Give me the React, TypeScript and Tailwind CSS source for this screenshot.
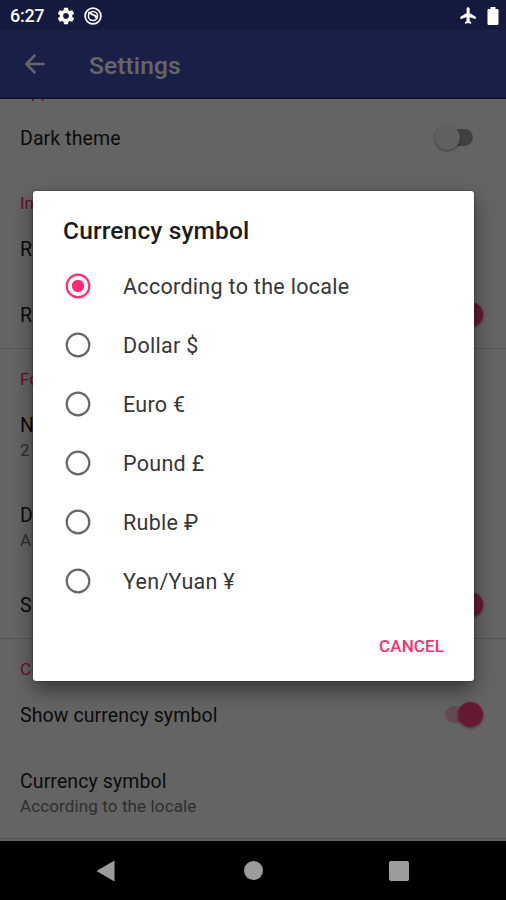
import { ReactNode, useState } from "react";

const currencies = [
  "According to the locale",
  "Dollar $",
  "Euro €",
  "Pound £",
  "Ruble ₽",
  "Yen/Yuan ¥",
];

function Switch({ on = false }: { on?: boolean }) {
  return (
    <span className={`flex h-6 w-[38px] items-center ${on ? "" : "mr-[10px]"}`}>
      <span className={`flex h-[17px] w-full items-center rounded-full ${on ? "justify-end bg-[#ff4081]/35" : "bg-[#a0a0a0]"}`}>
        <span
          className={`h-[25px] w-[25px] shrink-0 rounded-full shadow-[0_1px_3px_rgba(0,0,0,0.45)] ${
            on ? "bg-[#ff4081]" : "bg-[#f1f1f1]"
          }`}
        />
      </span>
    </span>
  );
}

function Section({ title, children }: { title: string; children: ReactNode }) {
  return (
    <section className="border-b border-[#d2d2d2]">
      <h2 className="flex h-[43px] items-end px-5 pb-[2px] text-[17px] leading-[21px] text-[#ff1f68]">{title}</h2>
      {children}
    </section>
  );
}

function Row({ title, summary, toggle }: { title: string; summary?: string; toggle?: boolean }) {
  return (
    <div className={`flex items-start justify-between pl-5 pr-[23px] ${summary ? "h-[90px]" : "h-[66px]"}`}>
      <div className="pt-[22px]">
        <p className="text-[19.5px] leading-6 tracking-[0.1px] text-[#202020]">{title}</p>
        {summary && <p className="text-[17px] leading-6 tracking-[0.12px] text-[#757575]">{summary}</p>}
      </div>
      {toggle !== undefined && (
        <div className="pt-[20px]">
          <Switch on={toggle} />
        </div>
      )}
    </div>
  );
}

export default function App() {
  const [selected, setSelected] = useState(0);

  return (
    <div className="relative flex h-[900px] w-[506px] flex-col overflow-hidden bg-[#fafafa] font-['Roboto',sans-serif]">
      {/* Status bar background, its icons sit above the scrim */}
      <div className="h-[30px] shrink-0 bg-[#303f9f]" />

      {/* App bar */}
      <header className="flex h-[69px] shrink-0 items-center border-b-2 border-[#26327d] bg-[#3f51b5] pl-[23px] text-white">
        <svg className="mt-px" width="24" height="24" viewBox="0 0 24 24" fill="none" stroke="currentColor" strokeWidth="2.5">
          <path d="M21.5 12H3.500M12.200 3L3.300 12l8.900 9" />
        </svg>
        <h1 className="ml-[42px] mt-1 text-[24.5px] font-medium leading-8 tracking-[0.15px]">Settings</h1>
      </header>

      {/* Preferences */}
      <main className="flex min-h-0 flex-1 flex-col overflow-hidden">
        <div className="flex h-[6px] shrink-0 items-end overflow-hidden px-5 pb-[2px] text-[17px] leading-[21px] text-[#ff1f68]">
          App
        </div>
        <div className="mb-px shrink-0 border-b border-[#efefef]">
          <Row title="Dark theme" toggle={false} />
        </div>
        <Section title="In">
          <Row title="R" />
          <Row title="R" toggle={true} />
        </Section>
        <Section title="Fo">
          <Row title="N" summary="2" />
          <Row title="D" summary="A" />
          <Row title="S" toggle={true} />
        </Section>
        <Section title="C">
          <Row title="Show currency symbol" toggle={true} />
          <Row title="Currency symbol" summary="According to the locale" />
        </Section>
      </main>

      {/* Navigation bar */}
      <nav className="h-[59px] shrink-0 bg-black" />

      {/* Scrim with dialog */}
      <div className="absolute inset-0 flex flex-col bg-black/60">
        <div className="flex h-[30px] items-center justify-between pl-[10px] pr-[7px] pt-px text-white">
          <div className="flex items-center">
            <span className="text-[18px] font-medium leading-5 tracking-[-0.3px]">6:27</span>
            <svg className="ml-[12px]" width="20" height="20" viewBox="0 0 24 24" fill="currentColor">
              <path d="M19.43 12.98c.04-.32.07-.64.07-.98s-.03-.66-.07-.98l2.11-1.65c.19-.15.24-.42.12-.64l-2-3.46c-.12-.22-.39-.3-.61-.22l-2.49 1c-.52-.4-1.08-.73-1.69-.98l-.38-2.65C14.46 2.18 14.25 2 14 2h-4c-.25 0-.46.18-.49.42l-.38 2.65c-.61.25-1.17.59-1.69.98l-2.49-1c-.23-.09-.49 0-.61.22l-2 3.46c-.13.22-.07.49.12.64l2.11 1.65c-.04.32-.07.65-.07.98s.03.66.07.98l-2.11 1.65c-.19.15-.24.42-.12.64l2 3.46c.12.22.39.3.61.22l2.49-1c.52.4 1.08.73 1.69.98l.38 2.65c.03.24.24.42.49.42h4c.25 0 .46-.18.49-.42l.38-2.65c.61-.25 1.17-.59 1.69-.98l2.49 1c.23.09.49 0 .61-.22l2-3.46c.12-.22.07-.49-.12-.64l-2.11-1.65zM12 15.5c-1.93 0-3.5-1.57-3.5-3.5s1.57-3.5 3.5-3.5 3.5 1.57 3.5 3.5-1.57 3.5-3.5 3.5z" />
            </svg>
            <svg className="ml-[8px]" width="18" height="18" viewBox="0 0 18 18" fill="none" stroke="currentColor">
              <circle cx="9" cy="9" r="7.9" strokeWidth="1.7" />
              <circle cx="9" cy="9" r="4.6" strokeWidth="1.5" />
              <path d="M4.2 5.8c2.4-.6 3.2 2 5.3 2.2 1.5.2 2.7 1.7 3 3.5" strokeWidth="2" />
            </svg>
          </div>
          <div className="flex items-center">
            <svg className="mr-px" width="19" height="19" viewBox="0 0 24 24" fill="currentColor" stroke="currentColor" strokeWidth="0.8">
              <path d="M21 16v-2l-8-5V3.500c0-.83-.67-1.500-1.500-1.500S10 2.670 10 3.500V9l-8 5v2l8-2.500V19l-2 1.500V22l3.500-1 3.500 1v-1.500L13 19v-5.500l8 2.500z" />
            </svg>
            <svg className="ml-[8px]" width="12" height="18" viewBox="0 0 12 18" fill="currentColor">
              <path d="M3.500 0h5v2h1.700A1.300 1.300 0 0 1 11.500 3.300v13.400a1.300 1.300 0 0 1-1.300 1.300H1.800A1.300 1.300 0 0 1 .5 16.700V3.300A1.300 1.300 0 0 1 1.800 2h1.700z" />
            </svg>
          </div>
        </div>

        <div
          role="dialog"
          className="ml-[33px] mt-[161px] flex h-[490px] w-[441px] flex-col rounded-[3px] bg-white shadow-[0_0_2px_rgba(0,0,0,0.5),0_9px_20px_rgba(0,0,0,0.45)]"
        >
          <h2 className="pl-[30px] pt-[24px] text-[24.5px] font-medium leading-8 tracking-[0.15px] text-[#1c1c1c]">Currency symbol</h2>
          <ul className="mt-[10px]">
            {currencies.map((label, i) => (
              <li key={label} className="flex h-[59px] cursor-pointer items-center pl-[32px]" onClick={() => setSelected(i)}>
                <svg
                  className={`mb-[2px] ${selected === i ? "text-[#ff2d74]" : "text-[#666]"}`}
                  width="26"
                  height="26"
                  viewBox="0 0 26 26"
                  fill="none"
                >
                  <circle cx="13" cy="13" r="11.3" stroke="currentColor" strokeWidth="2.2" />
                  {selected === i && <circle cx="13" cy="13" r="6.2" fill="currentColor" />}
                </svg>
                <span className="ml-[32px] text-[21.5px] leading-7 tracking-[0.3px] text-[#373737]">{label}</span>
              </li>
            ))}
          </ul>
          <button className="mr-[30px] mt-[23px] self-end text-[17px] font-medium leading-6 tracking-[0.1px] text-[#ff2d74]">CANCEL</button>
        </div>

        <div className="mt-auto flex h-[59px] items-center pl-[96px] text-[#9c9c9c]">
          <svg width="19" height="22" viewBox="0 0 19 22" fill="currentColor">
            <path d="M18.5.5v21L.5 11z" />
          </svg>
          <span className="ml-[129px] h-[19px] w-[19px] rounded-full bg-[#9c9c9c]" />
          <span className="ml-[126px] h-[20px] w-[20px] rounded-[2px] bg-[#9c9c9c]" />
        </div>
      </div>
    </div>
  );
}
